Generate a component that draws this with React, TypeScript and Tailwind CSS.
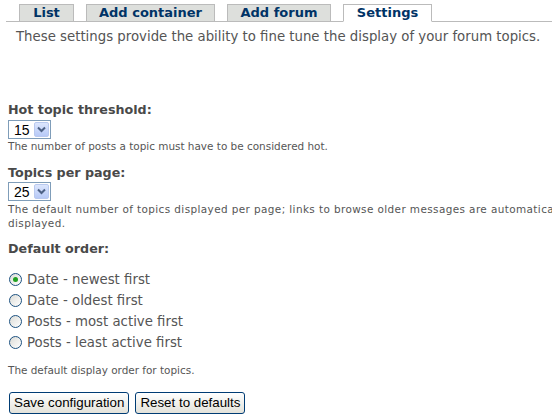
import React from "react";

const tabs = [
  { label: "List", w: "w-[55px]" },
  { label: "Add container", w: "w-[129px]" },
  { label: "Add forum", w: "w-[104px]" },
];

const Select = ({ value }: { value: string }) => (
  <div className="flex h-[19px] w-[43px] items-center border border-[#7f9db9] bg-white">
    <span className="flex-1 pl-[5px] text-[14px] leading-none text-black [font-family:'Liberation_Sans',Arial,sans-serif]">
      {value}
    </span>
    <span className="mr-[1px] flex h-[15px] w-[15px] items-center justify-center rounded-[2px] border border-[#b9c9ef] bg-gradient-to-b from-[#dce6fd] to-[#b7c9f7]">
      <svg width="9" height="7" viewBox="0 0 9 7">
        <path d="M1 1.5 L4.5 5 L8 1.5" fill="none" stroke="#4d6185" strokeWidth="2" />
      </svg>
    </span>
  </div>
);

const Radio = ({ label, checked }: { label: string; checked?: boolean }) => (
  <label className="flex h-[21px] items-center gap-[5px]">
    <span className="flex h-[13px] w-[13px] items-center justify-center rounded-full border border-[#1c5180] bg-gradient-to-br from-[#dcdcd7] to-white">
      {checked && <span className="h-[5px] w-[5px] rounded-full bg-[#21a121]" />}
    </span>
    <span className="leading-[16px]">{label}</span>
  </label>
);

const XpButton = ({ children }: { children: React.ReactNode }) => (
  <button className="h-[22px] rounded-[3px] border border-[#003c74] bg-gradient-to-b from-white to-[#e3e2da] px-[4px] text-[13.33px] leading-none text-black [font-family:'Liberation_Sans',Arial,sans-serif]">
    {children}
  </button>
);

export default function App() {
  return (
    <div className="h-[415px] w-[552px] overflow-hidden bg-white text-[13.3px] text-[#555] [font-family:'DejaVu_Sans',Verdana,sans-serif]">
      {/* Tabs */}
      <div className="ml-[6px] mt-[4px] flex gap-[12px] border-b border-[#bbb] pl-[13px] text-[13px]">
        {tabs.map((t) => (
          <div
            key={t.label}
            className={`${t.w} -mb-px flex h-[18px] items-center justify-center border border-[#bbb] bg-[#dddfdc] font-bold text-[#003366]`}
          >
            {t.label}
          </div>
        ))}
        <div className="-mb-px flex h-[18px] w-[89px] items-center justify-center border border-[#bbb] border-b-white bg-white font-bold text-[#003366]">
          Settings
        </div>
      </div>

      <p className="ml-[16px] mt-[7px] leading-[16px]">
        These settings provide the ability to fine tune the display of your forum topics.
      </p>

      <div className="ml-[8px] mt-[57px] flex flex-col">
        <div className="text-[12.7px] font-bold leading-[16px] text-[#494949]">Hot topic threshold:</div>
        <div className="mt-[2px]">
          <Select value="15" />
        </div>
        <div className="mt-[1px] text-[10.45px] leading-[13px]">
          The number of posts a topic must have to be considered hot.
        </div>

        <div className="mt-[12px] text-[12.7px] font-bold leading-[16px] text-[#494949]">Topics per page:</div>
        <div className="mt-[1px]">
          <Select value="25" />
        </div>
        <div className="mt-[1px] whitespace-nowrap text-[10.45px] leading-[14px] tracking-[0.4px]">
          The default number of topics displayed per page; links to browse older messages are automatically
          <br />
          displayed.
        </div>

        <div className="mt-[11px] text-[12.7px] font-bold leading-[16px] text-[#494949]">Default order:</div>
        <div className="mt-[12px] flex flex-col pl-[1px]">
          <Radio label="Date - newest first" checked />
          <Radio label="Date - oldest first" />
          <Radio label="Posts - most active first" />
          <Radio label="Posts - least active first" />
        </div>
        <div className="mt-[11px] text-[10.45px] leading-[13px]">The default display order for topics.</div>

        <div className="mt-[15px] flex gap-[6px] pl-[1px]">
          <XpButton>Save configuration</XpButton>
          <XpButton>Reset to defaults</XpButton>
        </div>
      </div>
    </div>
  );
}
